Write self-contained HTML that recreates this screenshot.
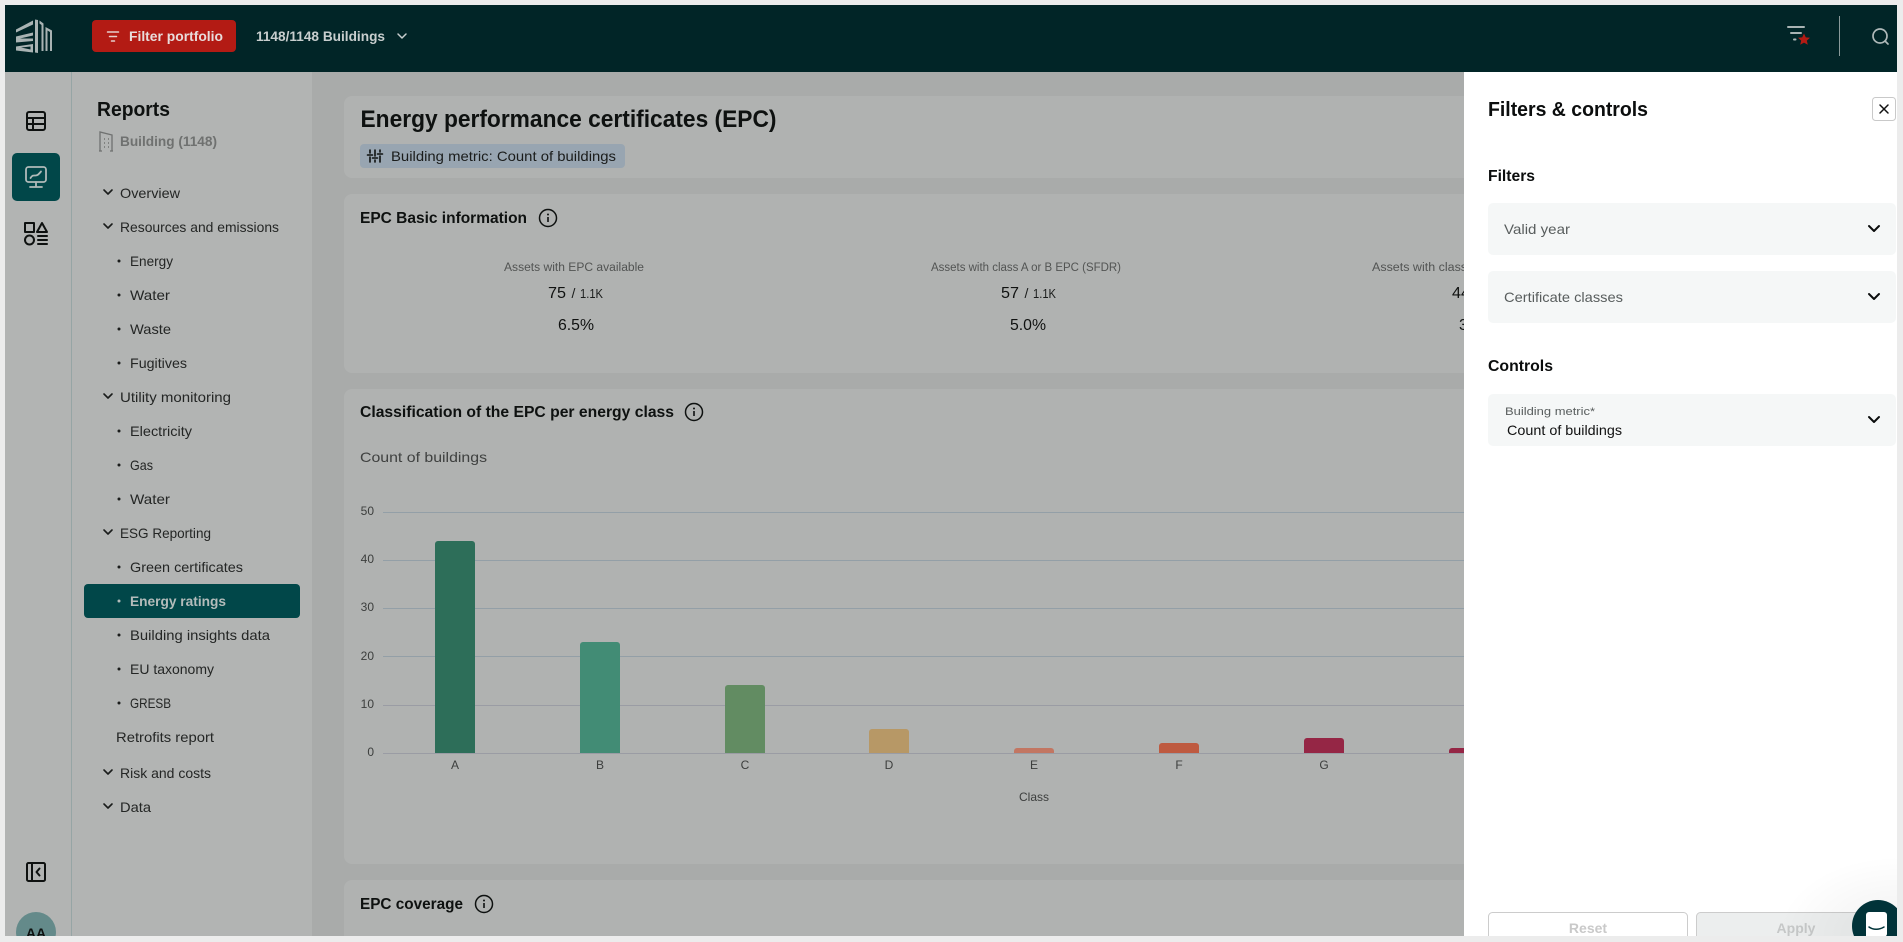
<!DOCTYPE html>
<html lang="en">
<head>
<meta charset="utf-8">
<title>Energy performance certificates (EPC)</title>
<style>
html,body{margin:0;padding:0;width:1903px;height:942px;overflow:hidden;background:#ececec}
svg{display:block;position:absolute;left:0;top:0}
text{font-family:"Liberation Sans",sans-serif}
.n{font-size:14px;fill:#242625}
.h{font-weight:700;fill:#0e1110}
.c{text-anchor:middle}
.ax{font-size:12px;fill:#3c3e3d}
.ic{fill:none;stroke:#0e1110;stroke-width:2;stroke-linecap:round;stroke-linejoin:round}
.ch{fill:none;stroke:#1a1c1b;stroke-width:1.6;stroke-linecap:round;stroke-linejoin:round}
.b{fill:#1a1c1b}
</style>
</head>
<body>
<svg width="1903" height="942" viewBox="0 0 1903 942" xmlns="http://www.w3.org/2000/svg">
<defs>
<clipPath id="page"><rect x="5" y="5" width="1892" height="931"/></clipPath>
<radialGradient id="glow" cx="1" cy="1" r="1"><stop offset="0" stop-color="#000" stop-opacity=".12"/><stop offset="1" stop-color="#000" stop-opacity="0"/></radialGradient>
</defs>
<rect width="1903" height="942" fill="#ececec"/>
<g clip-path="url(#page)">
<!-- base -->
<rect x="5" y="72" width="1892" height="864" fill="#a9abaa"/>
<rect x="5" y="72" width="307" height="864" fill="#b2b4b3"/>
<rect x="71" y="72" width="1" height="864" fill="#96a5a5"/>

<!-- cards -->
<rect x="344" y="96" width="1600" height="82" rx="8" fill="#b0b2b1"/>
<rect x="344" y="194" width="1600" height="179" rx="8" fill="#b0b2b1"/>
<rect x="344" y="389" width="1600" height="475" rx="8" fill="#b0b2b1"/>
<rect x="344" y="880" width="1600" height="100" rx="8" fill="#b0b2b1"/>

<!-- title card -->
<text x="360.5" y="127" class="h" font-size="24" textLength="416" lengthAdjust="spacingAndGlyphs">Energy performance certificates (EPC)</text>
<rect x="360" y="144" width="265" height="24" rx="4" fill="#98a5b1"/>
<g class="ic" style="stroke-width:1.6">
<path d="M370 150v3M370 157v5M375 150v6M375 160v2M380 150v2M380 156v6M367.500 155h5M372.500 158h5M377.500 154h5"/>
</g>
<text x="391" y="161" font-size="14" fill="#1a1c1b" textLength="225" lengthAdjust="spacingAndGlyphs">Building metric: Count of buildings</text>

<!-- EPC basic -->
<text x="360" y="223" class="h" font-size="16" textLength="167" lengthAdjust="spacingAndGlyphs">EPC Basic information</text>
<g><circle cx="548" cy="218" r="8.500" fill="none" stroke="#0e1110" stroke-width="1.500"/><rect x="547.200" y="217" width="1.600" height="5" fill="#0e1110"/><circle cx="548" cy="214.500" r="1" fill="#0e1110"/></g>

<text x="504" y="271" font-size="11.500" fill="#525453" textLength="140" lengthAdjust="spacingAndGlyphs">Assets with EPC available</text>
<text x="548" y="298" font-size="16" fill="#101211" textLength="18" lengthAdjust="spacingAndGlyphs">75</text>
<text x="571.500" y="298" font-size="14" fill="#1a1c1b">/</text>
<text x="580" y="298" font-size="13" fill="#1a1c1b" textLength="23" lengthAdjust="spacingAndGlyphs">1.1K</text>
<text x="558" y="330" font-size="16" fill="#101211" textLength="36" lengthAdjust="spacingAndGlyphs">6.5%</text>

<text x="931" y="271" font-size="11.500" fill="#525453" textLength="190" lengthAdjust="spacingAndGlyphs">Assets with class A or B EPC (SFDR)</text>
<text x="1001" y="298" font-size="16" fill="#101211" textLength="18" lengthAdjust="spacingAndGlyphs">57</text>
<text x="1024.500" y="298" font-size="14" fill="#1a1c1b">/</text>
<text x="1033" y="298" font-size="13" fill="#1a1c1b" textLength="23" lengthAdjust="spacingAndGlyphs">1.1K</text>
<text x="1010" y="330" font-size="16" fill="#101211" textLength="36" lengthAdjust="spacingAndGlyphs">5.0%</text>

<text x="1372" y="271" font-size="11.500" fill="#525453" textLength="170" lengthAdjust="spacingAndGlyphs">Assets with class A EPC (total)</text>
<text x="1452" y="298" font-size="16" fill="#101211" textLength="18" lengthAdjust="spacingAndGlyphs">44</text>
<text x="1459" y="330" font-size="16" fill="#101211" textLength="36" lengthAdjust="spacingAndGlyphs">3.8%</text>

<!-- classification -->
<text x="360" y="417" class="h" font-size="16" textLength="314" lengthAdjust="spacingAndGlyphs">Classification of the EPC per energy class</text>
<g><circle cx="694" cy="412" r="8.500" fill="none" stroke="#0e1110" stroke-width="1.500"/><rect x="693.200" y="411" width="1.600" height="5" fill="#0e1110"/><circle cx="694" cy="408.500" r="1" fill="#0e1110"/></g>
<text x="360" y="462" font-size="14" fill="#3f4140" textLength="127" lengthAdjust="spacingAndGlyphs">Count of buildings</text>

<g fill="#939fa7">
<rect x="383" y="512" width="1100" height="1"/>
<rect x="383" y="560" width="1100" height="1"/>
<rect x="383" y="608" width="1100" height="1"/>
<rect x="383" y="656" width="1100" height="1"/>
</g>
<rect x="383" y="705" width="1100" height="1" fill="#9a9ca4"/>
<rect x="383" y="753" width="1100" height="1" fill="#9a9ca4"/>

<text x="374" y="515" text-anchor="end" class="ax">50</text>
<text x="374" y="563" text-anchor="end" class="ax">40</text>
<text x="374" y="611" text-anchor="end" class="ax">30</text>
<text x="374" y="660" text-anchor="end" class="ax">20</text>
<text x="374" y="708" text-anchor="end" class="ax">10</text>
<text x="374" y="756" text-anchor="end" class="ax">0</text>

<path d="M435 753V544a3 3 0 0 1 3-3h34a3 3 0 0 1 3 3V753z" fill="#2d6e59"/>
<path d="M580 753V645a3 3 0 0 1 3-3h34a3 3 0 0 1 3 3V753z" fill="#428c75"/>
<path d="M725 753V688a3 3 0 0 1 3-3h34a3 3 0 0 1 3 3V753z" fill="#628c62"/>
<path d="M869 753V732a3 3 0 0 1 3-3h34a3 3 0 0 1 3 3V753z" fill="#b79866"/>
<path d="M1014 753V751a3 3 0 0 1 3-3h34a3 3 0 0 1 3 3V753z" fill="#c27662"/>
<path d="M1159 753V746a3 3 0 0 1 3-3h34a3 3 0 0 1 3 3V753z" fill="#be5a40"/>
<path d="M1304 753V741a3 3 0 0 1 3-3h34a3 3 0 0 1 3 3V753z" fill="#952645"/>
<path d="M1449 753V751a3 3 0 0 1 3-3h34a3 3 0 0 1 3 3V753z" fill="#952645"/>

<text x="455" y="769" class="ax c">A</text>
<text x="600" y="769" class="ax c">B</text>
<text x="745" y="769" class="ax c">C</text>
<text x="889" y="769" class="ax c">D</text>
<text x="1034" y="769" class="ax c">E</text>
<text x="1179" y="769" class="ax c">F</text>
<text x="1324" y="769" class="ax c">G</text>
<text x="1034" y="801" class="ax c">Class</text>

<!-- coverage -->
<text x="360" y="909" class="h" font-size="16" textLength="103" lengthAdjust="spacingAndGlyphs">EPC coverage</text>
<g><circle cx="484" cy="904" r="8.500" fill="none" stroke="#0e1110" stroke-width="1.500"/><rect x="483.200" y="903" width="1.600" height="5" fill="#0e1110"/><circle cx="484" cy="900.500" r="1" fill="#0e1110"/></g>

<!-- sidebar -->
<text x="97" y="116" class="h" font-size="20" textLength="73" lengthAdjust="spacingAndGlyphs">Reports</text>
<g fill="none" stroke="#6f7170" stroke-width="1.300">
<path d="M100 151V132l12 3v16M99 151h3M110 151h3"/>
<path d="M104 139h1M108 139h1M104 143h1M108 143h1M104 147h1M108 147h1" stroke-width="1.500"/>
</g>
<text x="120" y="146" font-size="14" font-weight="700" fill="#6f7170" textLength="97" lengthAdjust="spacingAndGlyphs">Building (1148)</text>

<g class="ch">
<path d="M104 190l4 4 4-4"/>
<path d="M104 224l4 4 4-4"/>
<path d="M104 394l4 4 4-4"/>
<path d="M104 530l4 4 4-4"/>
<path d="M104 770l4 4 4-4"/>
<path d="M104 804l4 4 4-4"/>
</g>

<text x="120" y="198" class="n" textLength="60" lengthAdjust="spacingAndGlyphs">Overview</text>
<text x="120" y="232" class="n" textLength="159" lengthAdjust="spacingAndGlyphs">Resources and emissions</text>
<text x="130" y="266" class="n" textLength="43" lengthAdjust="spacingAndGlyphs">Energy</text>
<text x="130" y="300" class="n" textLength="40" lengthAdjust="spacingAndGlyphs">Water</text>
<text x="130" y="334" class="n" textLength="41" lengthAdjust="spacingAndGlyphs">Waste</text>
<text x="130" y="368" class="n" textLength="57" lengthAdjust="spacingAndGlyphs">Fugitives</text>
<text x="120" y="402" class="n" textLength="111" lengthAdjust="spacingAndGlyphs">Utility monitoring</text>
<text x="130" y="436" class="n" textLength="62" lengthAdjust="spacingAndGlyphs">Electricity</text>
<text x="130" y="470" class="n" textLength="23" lengthAdjust="spacingAndGlyphs">Gas</text>
<text x="130" y="504" class="n" textLength="40" lengthAdjust="spacingAndGlyphs">Water</text>
<text x="120" y="538" class="n" textLength="91" lengthAdjust="spacingAndGlyphs">ESG Reporting</text>
<text x="130" y="572" class="n" textLength="113" lengthAdjust="spacingAndGlyphs">Green certificates</text>
<rect x="84" y="584" width="216" height="34" rx="4" fill="#014749"/>
<text x="130" y="606" font-size="14" font-weight="700" fill="#b4bcbb" textLength="96" lengthAdjust="spacingAndGlyphs">Energy ratings</text>
<text x="130" y="640" class="n" textLength="140" lengthAdjust="spacingAndGlyphs">Building insights data</text>
<text x="130" y="674" class="n" textLength="84" lengthAdjust="spacingAndGlyphs">EU taxonomy</text>
<text x="130" y="708" class="n" textLength="41" lengthAdjust="spacingAndGlyphs">GRESB</text>
<text x="116" y="742" class="n" textLength="98" lengthAdjust="spacingAndGlyphs">Retrofits report</text>
<text x="120" y="778" class="n" textLength="91" lengthAdjust="spacingAndGlyphs">Risk and costs</text>
<text x="120" y="812" class="n" textLength="31" lengthAdjust="spacingAndGlyphs">Data</text>

<g class="b">
<circle cx="119" cy="261" r="1.500"/><circle cx="119" cy="295" r="1.500"/><circle cx="119" cy="329" r="1.500"/><circle cx="119" cy="363" r="1.500"/>
<circle cx="119" cy="431" r="1.500"/><circle cx="119" cy="465" r="1.500"/><circle cx="119" cy="499" r="1.500"/>
<circle cx="119" cy="567" r="1.500"/><circle cx="119" cy="635" r="1.500"/><circle cx="119" cy="669" r="1.500"/><circle cx="119" cy="703" r="1.500"/>
</g>
<circle cx="119" cy="601" r="1.500" fill="#b4bcbb"/>

<!-- rail icons -->
<g class="ic">
<rect x="27" y="112" width="18" height="18" rx="2"/>
<path d="M27 118h18M27 124h18M33 118v12"/>
</g>
<rect x="12" y="153" width="48" height="48" rx="5" fill="#014749"/>
<g fill="none" stroke="#b0bab9" stroke-width="1.800" stroke-linecap="round" stroke-linejoin="round">
<rect x="26" y="167" width="20" height="15" rx="2.500"/>
<path d="M36 182v4M30 187h12"/>
<path d="M30.500 178c2-3 3-2.500 5-2.500s3-1 5.500-4"/>
</g>
<g class="ic">
<rect x="25" y="223" width="9" height="9"/>
<path d="M42 223l5 9h-10z"/>
<circle cx="29.500" cy="240" r="4.500"/>
<path d="M38 236h9M38 240h9M38 244h9"/>
</g>
<g class="ic">
<rect x="27" y="863" width="18" height="18" rx="1.500"/>
<path d="M32 863v18M39.500 868.500l-3 3.500 3 3.500"/>
</g>
<circle cx="36" cy="932" r="20" fill="#648a8a"/>
<text x="36" y="938" font-size="14" font-weight="700" fill="#0e1110" text-anchor="middle">AA</text>

<!-- header -->
<rect x="5" y="5" width="1892" height="67" fill="#012527"/>
<g fill="#a9b3b3">
<path d="M16 29.500L33 20.500V24.500L16 32.500z"/>
<path d="M16 36.500L33 32.500V35.500L20 38.500 33 38.500V41L16 42.500 16 40 z"/>
<path d="M16 46.500L33 44V52.500L16 50.500z M21 47.500L30.500 49.500V46.500z" fill-rule="evenodd"/>
<path d="M35 19.500L38 20V53L35 52.500z"/>
<path d="M39.500 20.500L43.500 23.500V51H41.500V25L39.500 23.500z"/>
<path d="M45.500 27L52 30.500V51H50V32L47.500 30.500V51H45.500z"/>
</g>
<rect x="92" y="20" width="144" height="32" rx="4" fill="#b31b14"/>
<g stroke="#e6cfcd" stroke-width="1.500" stroke-linecap="round"><path d="M107.500 32h11M109.500 36.500h7M111.500 41h3"/></g>
<text x="129" y="41" font-size="14" font-weight="700" fill="#e8dcdb" textLength="94" lengthAdjust="spacingAndGlyphs">Filter portfolio</text>
<text x="256" y="41" font-size="14" font-weight="700" fill="#c8cece" textLength="129" lengthAdjust="spacingAndGlyphs">1148/1148 Buildings</text>
<path d="M398 34l4 4 4-4" fill="none" stroke="#c8cece" stroke-width="1.500" stroke-linecap="round" stroke-linejoin="round"/>

<g stroke="#a9b3b3" stroke-width="2" stroke-linecap="round"><path d="M1788 27h16M1791 33h10M1794 39.500h1.500"/></g>
<path d="M1804 33.500l1.800 3.900 4.200.4-3.200 2.800 1 4.200-3.800-2.200-3.800 2.200 1-4.200-3.200-2.800 4.200-.4z" fill="#b31b14"/>
<rect x="1839" y="16" width="1" height="40" fill="#8a9a9a"/>
<g fill="none" stroke="#b0baba" stroke-width="1.700" stroke-linecap="round"><circle cx="1880" cy="36" r="7"/><path d="M1885 41l3 3"/></g>

<!-- panel -->
<rect x="1464" y="72" width="433" height="864" fill="#fff"/>
<text x="1488" y="116" class="h" font-size="20" textLength="160" lengthAdjust="spacingAndGlyphs" style="fill:#0b0d0d">Filters &amp; controls</text>
<rect x="1872.500" y="97.500" width="23" height="23" rx="3" fill="#fff" stroke="#c9c9c9"/>
<path d="M1880 105l8 8M1888 105l-8 8" stroke="#111" stroke-width="1.500" stroke-linecap="round"/>

<text x="1488" y="181" class="h" font-size="16" textLength="47" lengthAdjust="spacingAndGlyphs" style="fill:#0b0d0d">Filters</text>
<rect x="1488" y="203" width="408" height="52" rx="5" fill="#f5f7f7"/>
<text x="1504" y="234" font-size="14" fill="#585d5d" textLength="66" lengthAdjust="spacingAndGlyphs">Valid year</text>
<path d="M1869 226l5 5 5-5" fill="none" stroke="#0b0d0d" stroke-width="2" stroke-linecap="round" stroke-linejoin="round"/>

<rect x="1488" y="271" width="408" height="52" rx="5" fill="#f5f7f7"/>
<text x="1504" y="302" font-size="14" fill="#585d5d" textLength="119" lengthAdjust="spacingAndGlyphs">Certificate classes</text>
<path d="M1869 294l5 5 5-5" fill="none" stroke="#0b0d0d" stroke-width="2" stroke-linecap="round" stroke-linejoin="round"/>

<text x="1488" y="371" class="h" font-size="16" textLength="65" lengthAdjust="spacingAndGlyphs" style="fill:#0b0d0d">Controls</text>
<rect x="1488" y="394" width="408" height="52" rx="5" fill="#f5f7f7"/>
<text x="1505" y="415" font-size="11" fill="#585d5d" textLength="90" lengthAdjust="spacingAndGlyphs">Building metric*</text>
<text x="1507" y="435" font-size="14" fill="#111" textLength="115" lengthAdjust="spacingAndGlyphs">Count of buildings</text>
<path d="M1869 417l5 5 5-5" fill="none" stroke="#0b0d0d" stroke-width="2" stroke-linecap="round" stroke-linejoin="round"/>

<rect x="1488.500" y="912.500" width="199" height="40" rx="4" fill="#fff" stroke="#cccccc"/>
<text x="1588" y="933" font-size="14" font-weight="700" fill="#c9c9c9" text-anchor="middle">Reset</text>
<rect x="1696.500" y="912.500" width="199" height="40" rx="4" fill="#eceeee" stroke="#cccccc"/>
<text x="1796" y="933" font-size="14" font-weight="700" fill="#c6c8c8" text-anchor="middle">Apply</text>

<!-- chat -->
<rect x="1777" y="856" width="120" height="80" fill="url(#glow)" opacity=".5"/>
<circle cx="1878" cy="926" r="26" fill="#013339"/>
<path d="M1869 912h15a3 3 0 0 1 3 3v19a3 3 0 0 1-1 2h-20v-21a3 3 0 0 1 3-3z" fill="#fff"/>
<path d="M1869 927c4 3 10 3 15 0" fill="none" stroke="#013339" stroke-width="1.500" stroke-linecap="round"/>
</g>
</svg>
</body>
</html>
